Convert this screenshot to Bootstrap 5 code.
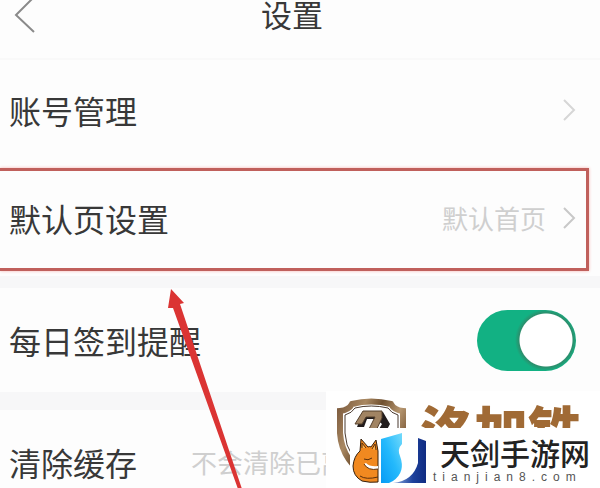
<!DOCTYPE html>
<html lang="zh-CN">
<head>
<meta charset="utf-8">
<meta name="viewport" content="width=device-width, initial-scale=1">
<title>设置</title>
<link href="https://cdn.jsdelivr.net/npm/bootstrap@5.3.0/dist/css/bootstrap.min.css" rel="stylesheet">
<style>
body{font-family:"Noto Sans CJK SC",sans-serif;background:#fdfdfd;color:#383838;line-height:32px}
.screen{height:100vh}
.topbar{height:60px;padding:0 16px 30px 0;border-bottom:2px solid #f9f9f9}
.topbar h1,.label-text{font-size:32px;line-height:32px}
.topbar h1{font-size:31px;line-height:28px}
.back{left:14px;top:0}
.setting{padding:0 24px 4px 9px;color:#383838;min-height:104px}
.tall{min-height:112px}
.last{min-height:108px}
.hint{font-size:26px;color:#cfcfcf}
.cache-hint{margin-left:54px}
.divider{height:12px;background:#f7f7f8}
.divider-wide{height:18px;background:#f7f7f8}
.highlight{left:0;right:11px;top:4px;height:103px;border:3px solid #c0605c;border-left:0;box-shadow:0 0 3px #f6b4b0}
.toggle.form-check-input{width:99px;height:61px;border:0;background-color:#12b183;background-image:radial-gradient(circle at 69px 30px,#fff 26px,#2c8e6c 27px,#12b183 31px);background-position:0 0;background-size:100% 100%}
.switch-row{padding-bottom:0}
.arrow{left:160px;top:284px}
.watermark{right:0;bottom:0;width:274px;height:97px;background:#fff}
.shield{left:0;top:0}
.brand{left:94px;top:11px;height:26px;font-size:54px;line-height:54px;font-weight:900;color:#a06a35}
.site{left:24px;top:37px;right:0;bottom:0;background:#fff;color:#222}
.site-name{font-size:30px;line-height:36px;font-weight:500;padding:6px 0 0 7px}
.site-url{font-family:"Liberation Sans",sans-serif;font-size:12px;line-height:14px;letter-spacing:6px;color:#555}
</style>
<script src="https://cdn.jsdelivr.net/npm/bootstrap@5.3.0/dist/js/bootstrap.bundle.min.js"></script>
</head>
<body>
<div class="screen position-relative overflow-hidden">
  <header class="topbar d-flex align-items-center justify-content-center position-relative">
    <button type="button" class="back btn p-0 border-0 position-absolute lh-1" aria-label="返回"><svg width="22" height="34" viewBox="0 0 22 34" fill="none" stroke="#8a8a8a" stroke-width="2"><path d="M20-3 2 15 20 32"/></svg></button>
    <h1 class="m-0 fw-normal">设置</h1>
  </header>
  <main>
    <a href="#account" class="setting d-flex align-items-center justify-content-between text-decoration-none">
      <span class="label-text">账号管理</span>
      <svg width="14" height="22" viewBox="0 0 14 22" fill="none" stroke="#d6d6d6" stroke-width="2"><path d="M2 1 12 11 2 21"/></svg>
    </a>
    <a href="#default-page" class="setting tall d-flex align-items-center text-decoration-none position-relative">
      <span class="label-text me-auto">默认页设置</span>
      <span class="hint me-3">默认首页</span>
      <svg width="14" height="22" viewBox="0 0 14 22" fill="none" stroke="#c8c8c8" stroke-width="2"><path d="M2 1 12 11 2 21"/></svg>
      <span class="highlight position-absolute"></span>
    </a>
    <div class="divider"></div>
    <div class="setting switch-row d-flex align-items-center justify-content-between">
      <label class="label-text" for="remind">每日签到提醒</label>
      <span class="form-switch p-0 m-0 d-flex"><input class="toggle form-check-input m-0" type="checkbox" role="switch" id="remind" checked></span>
    </div>
    <div class="divider-wide"></div>
    <a href="#cache" class="setting last d-flex align-items-center text-decoration-none">
      <span class="label-text">清除缓存</span>
      <span class="hint cache-hint text-nowrap">不会清除已离</span>
    </a>
  </main>
  <svg class="arrow position-absolute" width="90" height="210" viewBox="0 0 90 210"><path d="M11 5 24 19 20 20 82 205 78 205 13 24 8 24Z" fill="#db3433"/></svg>
  <div class="watermark position-absolute overflow-hidden">
    <svg class="shield position-absolute" width="90" height="97" viewBox="0 0 90 97">
      <defs><linearGradient id="bronze" x2="1" y2=".6"><stop stop-color="#7d5c3f"/><stop offset=".3" stop-color="#a98862"/><stop offset=".5" stop-color="#70502f"/><stop offset=".75" stop-color="#b69670"/><stop offset="1" stop-color="#71502f"/></linearGradient></defs>
      <path d="M14 20Q23 19 26 13Q45 8 65 13Q68 19 77 20V42Q76 72 46 88Q16 72 14 42Z" fill="#fff" stroke="url(#bronze)" stroke-width="6"/>
      <path d="M19 24Q26 22 29 17Q45 13 62 17Q65 22 72 24V42Q71 67 46 82Q20 67 19 42Z" fill="none" stroke="#49382e" stroke-width="1"/>
      <path d="M37 21H57L64 33 56 48H47L56 33 50 28H41L38 36H31Z" fill="#211c1c"/>
      <path d="M37 20H56V27L47 46H39L49 26H40L36 33H29Z" fill="#a18463" stroke="#55402d" stroke-width="1"/>
    </svg>
    <div class="brand position-absolute text-nowrap overflow-hidden">洛加铁</div>
    <div class="site d-flex position-absolute">
      <svg class="flex-shrink-0" width="83" height="60" viewBox="350 428 83 60">
        <defs><linearGradient id="sky" x1="0" y1="1" x2="1" y2="0"><stop stop-color="#079bf5"/><stop offset=".5" stop-color="#24b9fc"/><stop offset="1" stop-color="#73dafb"/></linearGradient><linearGradient id="navy" x2="1"><stop stop-color="#8faee0"/><stop offset=".6" stop-color="#1e419c"/><stop offset="1" stop-color="#102c82"/></linearGradient></defs>
        <path d="M360 451 361 439 368 447Q370 446 371 447L376 440 378 451V482Q370 483 362 481Q353 476 353 466Q354 456 360 451Z" fill="#f18920" stroke="#35200d" stroke-width="1"/>
        <path d="M362 448 362 443 366 448M372 449 375 444 376 450" fill="#ffb04b" stroke="#5b300d" stroke-width="1"/>
        <path d="M364 464Q368 471 378 469V466Q370 467 366 463Z" fill="#fff"/>
        <path d="M364 459Q368 461 372 458M364 464Q368 471 378 469M360 476Q366 480 378 477" fill="none" stroke="#5b300d" stroke-width="1"/>
        <path d="M381 439 402 433V444Q397 449 400 456Q406 472 393 481L389 483H381Z" fill="url(#sky)"/>
        <path d="M418 438 426 441V483H393Q413 481 418 463Z" fill="url(#navy)"/>
      </svg>
      <div>
        <div class="site-name text-nowrap">天剑手游网</div>
        <div class="site-url text-nowrap">tianjian8.com</div>
      </div>
    </div>
  </div>
</div>
</body>
</html>
